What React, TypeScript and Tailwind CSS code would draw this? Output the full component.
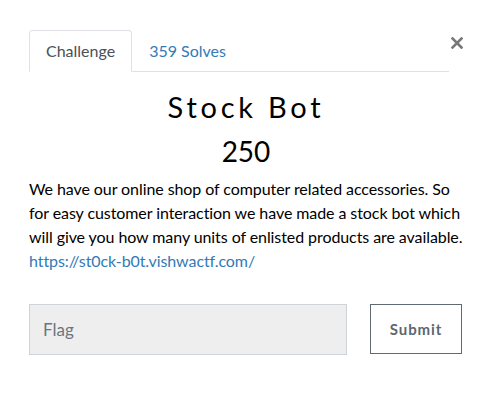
import React from "react";

export default function App() {
  return (
    <div className="w-[489px] h-[400px] bg-white font-['Lato',sans-serif] text-[#212529]">
      <div className="pt-[30px] pl-[29px] pr-[26px]">
        <div className="flex items-start">
          <nav className="flex flex-1 border-b border-[#dee2e6]">
            <a className="-mb-px block px-4 py-2 text-[16px] leading-6 text-[#495057] bg-white border border-[#dee2e6] border-b-white rounded-t">
              Challenge
            </a>
            <a className="-mb-px block px-4 py-2 text-[16px] leading-6 text-[#337ab7] border border-transparent">
              359 Solves
            </a>
          </nav>
          <button className="w-[14px] mt-[7px] flex justify-end text-[#777]">
            <svg width="12" height="12" viewBox="0 0 12 12">
              <path d="M1.5 1.5 L10.5 10.5 M10.5 1.5 L1.5 10.5" stroke="currentColor" strokeWidth="2.6" strokeLinecap="square" />
            </svg>
          </button>
        </div>

        <h2 className="mt-[18px] text-center text-[29px] leading-[34px] tracking-[0.13em] font-normal text-black">
          Stock Bot
        </h2>
        <h3 className="mt-[10px] text-center text-[28px] leading-[34px] font-normal text-black">250</h3>

        <div className="mt-[9px] text-[16px] leading-6 text-black whitespace-nowrap tracking-[-0.005em]">
          <p>
            We have our online shop of computer related accessories. So
            <br />
            for easy customer interaction we have made a stock bot which
            <br />
            will give you how many units of enlisted products are available.
          </p>
          <a className="text-[#337ab7]">https://st0ck-b0t.vishwactf.com/</a>
        </div>

        <div className="mt-[31px] flex items-start gap-[23px]">
          <input
            placeholder="Flag"
            className="w-[318px] h-[51px] bg-[#eeeeee] border border-[#cfd4d9] px-[13px] text-[17px] text-[#495057] placeholder:text-[#6c757d] outline-none"
          />
          <button className="w-[92px] h-[50px] border border-[#5f6b74] text-[#5c6770] text-[15px] font-bold tracking-[0.06em]">
            Submit
          </button>
        </div>
      </div>
    </div>
  );
}
